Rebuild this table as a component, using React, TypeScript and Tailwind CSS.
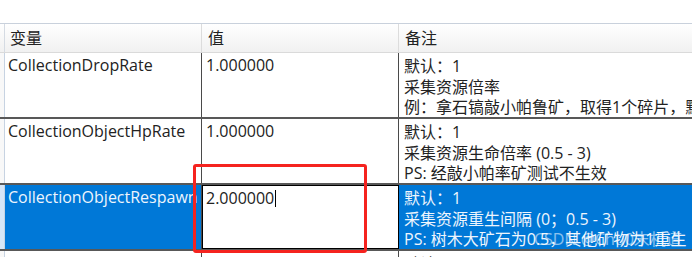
import React from "react";

type Row = {
  name: string;
  value: string;
  notes: string[];
};

const rows: Row[] = [
  {
    name: "CollectionDropRate",
    value: "1.000000",
    notes: ["默认：1", "采集资源倍率", "例：拿石镐敲小帕鲁矿，取得1个碎片，默认"],
  },
  {
    name: "CollectionObjectHpRate",
    value: "1.000000",
    notes: ["默认：1", "采集资源生命倍率 (0.5 - 3)", "PS: 经敲小帕率矿测试不生效"],
  },
  {
    name: "CollectionObjectRespawn",
    value: "2.000000",
    notes: ["默认：1", "采集资源重生间隔 (0；0.5 - 3)", "PS: 树木大矿石为0.5，其他矿物为1重生"],
  },
  {
    name: "EnemyDropItemRate",
    value: "1.000000",
    notes: ["默认：1"],
  },
];

export default function App() {
  const selected = 2;

  return (
    <div className="relative h-[257px] w-[692px] overflow-hidden bg-white pt-[23px] font-['Open_Sans','Noto_Sans_CJK_SC',sans-serif] text-[16px] text-[#222]">
      {/* column header */}
      <div className="flex h-[30px] border-t border-b border-t-[#c9d1dc] border-b-[#dadada] bg-gradient-to-b from-white to-[#f1f1f1]">
        <div className="w-[5px] shrink-0 border-r border-[#d5dbe3]" />
        <div className="flex w-[197px] shrink-0 items-center border-r border-[#dcdcdc] pl-[5px]">变量</div>
        <div className="flex w-[197px] shrink-0 items-center border-r border-[#dcdcdc] pl-[6px]">值</div>
        <div className="flex flex-1 items-center pl-[6px]">备注</div>
      </div>

      {rows.map((row, i) => {
        const isSel = i === selected;
        return (
          <div key={row.name} className="flex h-[66px] border-b-2 border-[#585858]">
            <div className={`w-[5px] shrink-0 border-r border-[#c7d3e2] ${isSel ? "bg-[#d6e6f7]" : "bg-[#f8f8f8]"}`} />
            <div
              className={`w-[197px] shrink-0 overflow-hidden whitespace-nowrap border-r border-[#4a4a4a] pl-[3px] pt-[2px] leading-[21px] ${
                isSel ? "bg-[#0078d7] text-[#eef5fd]" : ""
              }`}
            >
              {row.name}
            </div>
            {isSel ? (
              <div className="w-[197px] shrink-0 border border-black bg-white pl-[3px] pt-[1px] leading-[21px]">
                <span>{row.value}</span>
                <span className="ml-[1px] inline-block h-[17px] w-px translate-y-[3px] bg-black" />
              </div>
            ) : (
              <div className="w-[197px] shrink-0 border-r border-[#4a4a4a] pl-[4px] pt-[2px] leading-[21px]">{row.value}</div>
            )}
            <div
              className={`relative flex-1 overflow-hidden whitespace-nowrap pl-[5px] pt-[3px] leading-[20.5px] ${
                isSel ? "bg-[#0078d7] text-[#eef5fd]" : ""
              }`}
            >
              {row.notes.map((n) => (
                <div key={n}>{n}</div>
              ))}
              {isSel && (
                <span className="absolute left-[135px] top-[44px] text-white/55">CSDN @Chu0末机道</span>
              )}
            </div>
          </div>
        );
      })}

      {/* red highlight frame */}
      <div className="absolute left-[193px] top-[164px] h-[89px] w-[174px] rounded-[3px] border-[3px] border-[#f5231f]" />
    </div>
  );
}
